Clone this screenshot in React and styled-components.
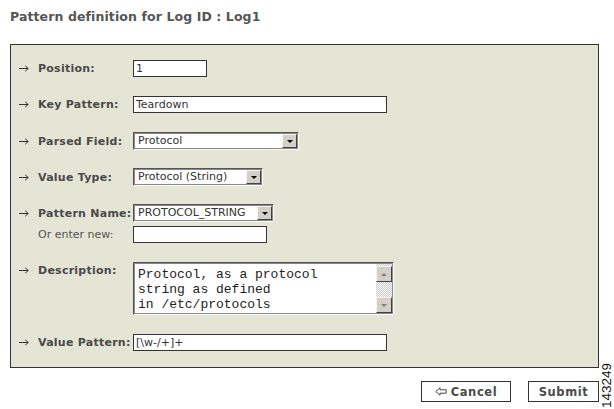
import React from 'react';
import styled, {createGlobalStyle} from 'styled-components';

const GlobalStyle = createGlobalStyle`
    html, body {
        margin: 0;
        padding: 0;
        background: #ffffff;
    }
    body {
        font-family: "DejaVu Sans", Verdana, sans-serif;
        font-size: 11px;
        color: #444;
    }
`;

const Page = styled.div`
    position: relative;
    width: 614px;
    height: 409px;
    padding: 0 10px;
    box-sizing: border-box;
`;

const Title = styled.div`
    margin-top: 8px;
    height: 18px;
    line-height: 18px;
    font-size: 12.5px;
    font-weight: bold;
    color: #555;
    letter-spacing: 0.1px;
`;

const Panel = styled.div`
    margin-top: 18px;
    width: 589px;
    box-sizing: border-box;
    border: 1px solid #333;
    background-color: #e5e5d6;
    padding: 15px 0 16px 8px;
    display: flex;
    flex-direction: column;
`;

const Row = styled.div`
    display: grid;
    grid-template-columns: 19px 95px 1fr;
    align-items: ${p => (p.$top ? 'start' : 'center')};
    margin-top: ${p => p.$space || 0}px;
    min-height: 17px;
`;

const ArrowCell = styled.span`
    height: 17px;
    display: flex;
    align-items: center;
`;

const Label = styled.span`
    line-height: 17px;
    font-weight: ${p => (p.$sub ? 'normal' : 'bold')};
    color: ${p => (p.$sub ? '#555' : '#4a4a4a')};
    letter-spacing: ${p => (p.$sub ? '0' : '0.25px')};
    white-space: nowrap;
`;

const TextBox = styled.div`
    width: ${p => p.$w}px;
    height: 17px;
    box-sizing: border-box;
    border: 1px solid #333;
    background: #fff;
    padding: 0 2px;
    line-height: 15px;
    font-size: 11px;
    color: #333;
    white-space: nowrap;
    overflow: hidden;
`;

const SelectBox = styled.div`
    width: ${p => p.$w}px;
    height: 18px;
    box-sizing: border-box;
    border-style: solid;
    border-width: 1px;
    border-color: #555 #fff #fff #555;
    outline: 1px solid #888;
    outline-offset: -2px;
    background: #fff;
    display: flex;
    align-items: stretch;
    padding: 1px;
`;

const SelectText = styled.span`
    flex: 1;
    padding-left: 3px;
    line-height: 14px;
    font-size: 11px;
    color: #333;
    white-space: nowrap;
    overflow: hidden;
`;

const DropButton = styled.span`
    width: 15px;
    box-sizing: border-box;
    background: #d4d0c8;
    border-style: solid;
    border-width: 1px;
    border-color: #f4f4f4 #404040 #404040 #f4f4f4;
    display: flex;
    align-items: center;
    justify-content: center;
`;

const Triangle = styled.span`
    width: 0;
    height: 0;
    border-left: 3px solid transparent;
    border-right: 3px solid transparent;
    border-${p => (p.$up ? 'bottom' : 'top')}: 3px solid ${p => p.$color || '#000'};
    margin-top: 1px;
`;

const TextArea = styled.div`
    width: 261px;
    height: 53px;
    box-sizing: border-box;
    border-style: solid;
    border-width: 1px;
    border-color: #555 #fff #fff #555;
    outline: 1px solid #888;
    outline-offset: -2px;
    background: #fff;
    display: flex;
    padding: 1px;
`;

const AreaText = styled.div`
    flex: 1;
    padding: 3px 0 0 3px;
    font-family: "Liberation Mono", "Courier New", monospace;
    font-size: 13px;
    line-height: 15px;
    color: #222;
    white-space: pre;
    overflow: hidden;
`;

const ScrollBar = styled.div`
    width: 16px;
    padding-top: 2px;
    display: flex;
    flex-direction: column;
    background: repeating-conic-gradient(#c8c8c8 0 25%, #ffffff 0 50%) 0 0 / 2px 2px;
`;

const ScrollButton = styled.span`
    height: 16px;
    box-sizing: border-box;
    background: #d4d0c8;
    border-style: solid;
    border-width: 1px;
    border-color: #f4f4f4 #404040 #404040 #f4f4f4;
    display: flex;
    align-items: center;
    justify-content: center;
`;

const Track = styled.span`
    flex: 1;
`;

const Buttons = styled.div`
    width: 589px;
    margin-top: 13px;
    display: flex;
    justify-content: flex-end;
    gap: 17px;
`;

const Button = styled.div`
    width: ${p => p.$w}px;
    height: 21px;
    box-sizing: border-box;
    border: 1px solid #333;
    background: #fff;
    display: flex;
    align-items: center;
    justify-content: center;
    gap: 4px;
    font-weight: bold;
    font-size: 11.5px;
    letter-spacing: 0.6px;
    color: #4a4a4a;
`;

const FigureId = styled.div`
    position: absolute;
    left: 600px;
    top: 355px;
    writing-mode: vertical-rl;
    transform: rotate(180deg);
    font-family: "Liberation Sans", Arial, sans-serif;
    font-size: 13.5px;
    line-height: 13px;
    color: #111;
`;

const RowArrow = () => (
    <ArrowCell>
        <svg width="10" height="7" viewBox="0 0 10 7">
            <path d="M0 3.5 H9.2 M6.2 0.8 L9.2 3.5 L6.2 6.2"
                  fill="none" stroke="#333" strokeWidth="1" />
        </svg>
    </ArrowCell>
);

const BackIcon = () => (
    <svg width="12" height="9" viewBox="0 0 12 9">
        <path d="M0.8 4.5 L5 0.8 L5 2.8 L11.2 2.8 L11.2 6.2 L5 6.2 L5 8.2 Z"
              fill="none" stroke="#444" strokeWidth="1" />
    </svg>
);

const Select = ({w, value}) => (
    <SelectBox $w={w}>
        <SelectText>{value}</SelectText>
        <DropButton><Triangle /></DropButton>
    </SelectBox>
);

const App = () => {
    return (
        <Page>
            <GlobalStyle />
            <Title>Pattern definition for Log ID : Log1</Title>
            <Panel>
                <Row>
                    <RowArrow />
                    <Label>Position:</Label>
                    <TextBox $w={74}>1</TextBox>
                </Row>
                <Row $space={19}>
                    <RowArrow />
                    <Label>Key Pattern:</Label>
                    <TextBox $w={254}>Teardown</TextBox>
                </Row>
                <Row $space={19}>
                    <RowArrow />
                    <Label>Parsed Field:</Label>
                    <Select w={166} value="Protocol" />
                </Row>
                <Row $space={18}>
                    <RowArrow />
                    <Label>Value Type:</Label>
                    <Select w={130} value="Protocol (String)" />
                </Row>
                <Row $space={18}>
                    <RowArrow />
                    <Label>Pattern Name:</Label>
                    <Select w={141} value="PROTOCOL_STRING" />
                </Row>
                <Row $space={4}>
                    <span />
                    <Label $sub>Or enter new:</Label>
                    <TextBox $w={134} />
                </Row>
                <Row $space={19} $top>
                    <RowArrow />
                    <Label>Description:</Label>
                    <TextArea>
                        <AreaText>{'Protocol, as a protocol\nstring as defined\nin /etc/protocols'}</AreaText>
                        <ScrollBar>
                            <ScrollButton><Triangle $up $color="#808080" /></ScrollButton>
                            <Track />
                            <ScrollButton><Triangle $color="#808080" /></ScrollButton>
                        </ScrollBar>
                    </TextArea>
                </Row>
                <Row $space={19}>
                    <RowArrow />
                    <Label>Value Pattern:</Label>
                    <TextBox $w={254}>[\w-/+]+</TextBox>
                </Row>
            </Panel>
            <Buttons>
                <Button $w={90}><BackIcon />Cancel</Button>
                <Button $w={71}>Submit</Button>
            </Buttons>
            <FigureId>143249</FigureId>
        </Page>
    );
};

export default App;
